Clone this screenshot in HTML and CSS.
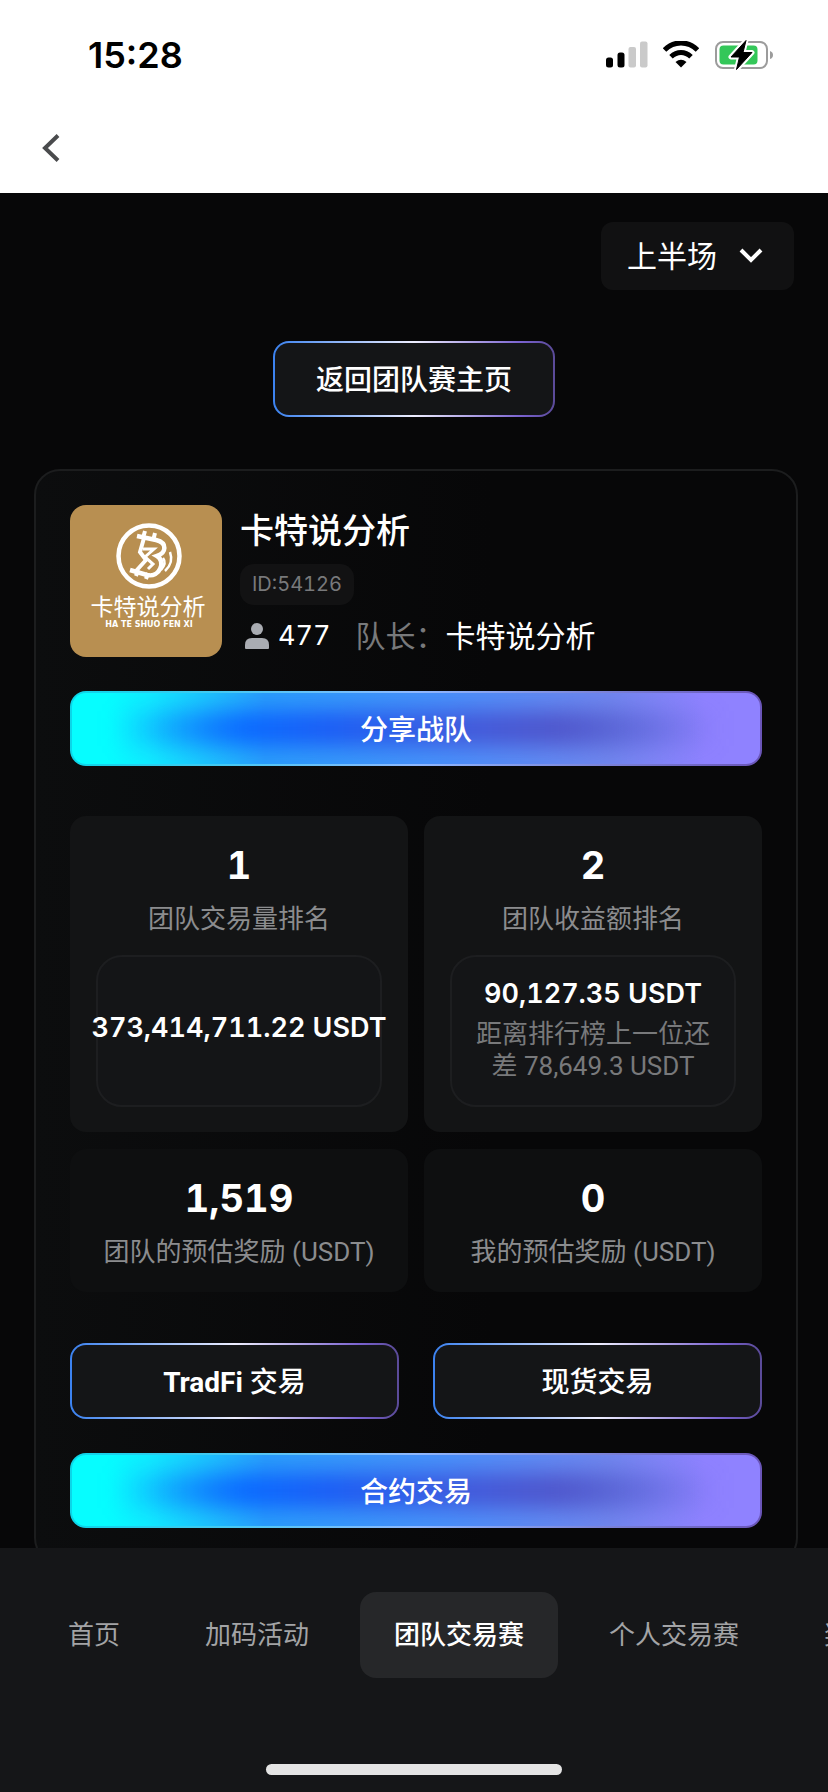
FILE: index.html
```
<!DOCTYPE html>
<html lang="zh-CN">

<head>
	<meta charset="UTF-8">
	<meta name="viewport" content="width=device-width, initial-scale=1">
	<title>团队交易赛</title>
	<link rel="stylesheet" href="styles.css">
</head>

<body>
	<div class="app">
		<header class="top">
			<div class="status_bar">
				<span class="clock">15:28</span>
				<div class="status_icons">
					<svg class="icon_signal" width="42" height="28" viewBox="0 0 42 28">
						<rect x="0" y="16.5" width="7" height="10" rx="2.5" />
						<rect x="11.5" y="11.5" width="7" height="15" rx="2.5" />
						<rect x="22.5" y="6" width="7.5" height="20.500" rx="2" fill="#cacaca" />
						<rect x="34" y="0.500" width="7.5" height="26" rx="2" fill="#cacaca" />
					</svg>
					<svg class="icon_wifi" width="36" height="28" viewBox="0 0 36 28">
						<path d="M1.500 9C11 -0.500 25 -0.500 34.500 9" fill="none" stroke="#000" stroke-width="5" />
						<path d="M8 15.800C14 10 22 10 28 15.800" fill="none" stroke="#000" stroke-width="5" />
						<path d="M12.500 21Q18 16.500 23.500 21L18 26.500Z" />
					</svg>
					<svg class="icon_battery" width="60" height="32" viewBox="0 0 60 32">
						<rect x="2" y="3" width="51" height="26" rx="7" fill="#fff" stroke="#9c9c9c" stroke-width="2" />
						<rect x="5.500" y="6.500" width="38" height="19" rx="4" fill="#34c759" />
						<path d="M56 12q3 1 3 4t-3 4z" fill="#9c9c9c" />
						<path d="M32 1.500L17 18h8.500L22.500 30.500L38 13.500h-9z" stroke="#fff" stroke-width="5" stroke-linejoin="round" />
						<path d="M32 1.500L17 18h8.500L22.500 30.500L38 13.500h-9z" stroke="#000" stroke-width="1" stroke-linejoin="round" />
					</svg>
				</div>
			</div>
			<div class="nav_bar">
				<button class="back" type="button" aria-label="返回">
					<svg width="18" height="28" viewBox="0 0 18 28">
						<path d="M16 1.500L3 14L16 26.500" fill="none" stroke="#4a4b4d" stroke-width="4" />
					</svg>
				</button>
			</div>
		</header>

		<main class="content">
			<div class="period">
				<select class="period_select" aria-label="赛段">
					<option>上半场</option>
					<option>下半场</option>
				</select>
				<svg class="period_arrow" width="24" height="16" viewBox="0 0 24 16">
					<path d="M2 2L12 12L22 2" fill="none" stroke="#fff" stroke-width="4" />
				</svg>
			</div>

			<button class="btn btn_outline btn_home" type="button">返回团队赛主页</button>

			<section class="card">
				<div class="team">
					<svg class="avatar" viewBox="0 0 152 152" role="img" aria-label="卡特说分析">
						<rect width="152" height="152" fill="#b88f51" />
						<g fill="none" stroke="#fff">
							<circle cx="79" cy="51" r="30.500" stroke-width="4.500" />
							<path d="M67 31L86 35C98 38 96 48 87 51C96 56 90 73 77 70L60 65" stroke-width="4.500" />
							<path d="M74 33L70 47L76 55L66 66" stroke-width="4" />
							<path d="M73 44H84L75 52L83 59L78 64" stroke-width="3" />
							<path d="M75 26L73 33M85 28L83 36M68 65L66 71M78 68L76 74" stroke-width="4" />
							<path d="M93 53Q97 58 91 65M100 47Q104 58 95 66" stroke-width="2.500" />
						</g>
						<text class="avatar_name" x="78" y="110">卡特说分析</text>
						<text class="avatar_latin" x="79" y="122">HA TE SHUO FEN XI</text>
					</svg>
					<div class="team_info">
						<h1 class="team_name">卡特说分析</h1>
						<span class="team_id">ID:54126</span>
						<div class="team_meta">
							<svg width="26" height="28" viewBox="0 0 26 28" fill="#a9acb2">
								<circle cx="13" cy="7" r="6" />
								<path d="M1 26v-3q0-7 7-7h10q7 0 7 7v3q0 1-1 1H2q-1 0-1-1z" />
							</svg>
							<span class="team_count">477</span>
							<span class="team_label">队长：</span>
							<span class="team_leader">卡特说分析</span>
						</div>
					</div>
				</div>

				<button class="btn btn_primary" type="button">分享战队</button>

				<div class="stats">
					<div class="stat">
						<div class="stat_value">1</div>
						<div class="stat_label">团队交易量排名</div>
						<div class="stat_box">
							<div class="amount">373,414,711.22 USDT</div>
						</div>
					</div>
					<div class="stat">
						<div class="stat_value">2</div>
						<div class="stat_label">团队收益额排名</div>
						<div class="stat_box">
							<div class="amount">90,127.35 USDT</div>
							<p class="stat_hint">距离排行榜上一位还差 78,649.3 USDT</p>
						</div>
					</div>
					<div class="stat stat_dim">
						<div class="stat_value">1,519</div>
						<div class="stat_label">团队的预估奖励 (USDT)</div>
					</div>
					<div class="stat stat_dim">
						<div class="stat_value">0</div>
						<div class="stat_label">我的预估奖励 (USDT)</div>
					</div>
				</div>

				<div class="trade">
					<button class="btn btn_outline" type="button"><b>TradFi</b> 交易</button>
					<button class="btn btn_outline" type="button">现货交易</button>
				</div>
				<button class="btn btn_primary" type="button">合约交易</button>
			</section>
		</main>

		<footer class="bottom">
			<nav class="tabs">
				<a class="tab" href="#">首页</a>
				<a class="tab" href="#">加码活动</a>
				<a class="tab tab_active" href="#">团队交易赛</a>
				<a class="tab" href="#">个人交易赛</a>
				<a class="tab" href="#">奖励</a>
			</nav>
			<div class="home_indicator"></div>
		</footer>
	</div>
</body>

</html>
```
FILE: styles.css
```
* {
	box-sizing: border-box;
}

body {
	margin: 0;
	background-color: #070708;
	color: #fff;
	font-family: Inter, "Noto Sans CJK SC", sans-serif;
	font-variant-numeric: tabular-nums;
}

button, select {
	font-family: inherit;
	color: inherit;
	cursor: pointer;
}

.app {
	display: flex;
	flex-direction: column;
	height: 100vh;
}

/* Status bar and back button */
.top {
	flex: none;
	background-color: #fff;
	color: #000;
}

.status_bar {
	display: flex;
	justify-content: space-between;
	align-items: center;
	height: 110px;
	padding: 0 54px 0 88px;
}

.clock {
	font-size: 36px;
	font-weight: 600;
	font-variant-numeric: normal;
}

.status_icons {
	display: flex;
	align-items: center;
	gap: 15px;
}

.nav_bar {
	display: flex;
	align-items: center;
	height: 83px;
	padding: 0 34px 8px;
}

.back {
	display: flex;
	padding: 8px;
	border: 0;
	background: none;
}

/* Page */
.content {
	flex: 1;
	min-height: 0;
	overflow: hidden auto;
	scrollbar-width: none;
	padding: 29px 34px 24px;
}

.period {
	position: relative;
	width: 193px;
	margin-left: auto;
}

.period_select {
	display: block;
	width: 100%;
	height: 68px;
	padding: 0 26px;
	border: 0;
	border-radius: 12px;
	background-color: #111112;
	font-size: 30px;
	appearance: none;
}

.period_arrow {
	position: absolute;
	right: 31px;
	top: 26px;
	pointer-events: none;
}

.btn {
	display: block;
	width: 100%;
	height: 76px;
	padding: 0 41px 2px;
	border: 2px solid transparent;
	border-radius: 16px;
	font-family: Roboto, "Noto Sans CJK SC", sans-serif;
	font-size: 28px;
	font-weight: 500;
}

.btn_outline {
	background:
		linear-gradient(#141517, #141517) padding-box,
		linear-gradient(90deg, #3b82f0, #eef 50%, #7a62d0 88%, #5a4a98) border-box;
}

.btn_home {
	width: auto;
	margin: 51px auto 52px;
}

/* Blue glow sits inside the button, under its text */
.btn_primary {
	position: relative;
	z-index: 0;
	overflow: hidden;
	height: 75px;
	background:
		linear-gradient(90deg, #06fdff 5%, #10ecff 11%, #2a9dfb 28%, #4a90fa 55%, #7086ee 78%, #8f82ff 92%) padding-box,
		linear-gradient(90deg, #0bd5e8, #8fb8ff 50%, #6a55b8) border-box;
}

.btn_primary::before {
	content: "";
	position: absolute;
	z-index: -1;
	inset: 18px 6%;
	background: linear-gradient(90deg, #0a80ff00, #0a68ff 22%, #1a5cf5 35%, #4358d8 60%, #4f55ca 74%, #6a60e000);
	filter: blur(11px);
}

.card {
	margin-right: -4px;
	padding: 34px;
	border: 2px solid #1c1d1e;
	border-radius: 26px;
	background: linear-gradient(90deg, #0c0d0e, #070708 60%);
}

.team {
	display: flex;
	gap: 18px;
	margin-bottom: 34px;
}

.avatar {
	flex: none;
	width: 152px;
	height: 152px;
	border-radius: 16px;
}

.avatar_name, .avatar_latin {
	fill: #fff;
	text-anchor: middle;
}

.avatar_name {
	font-size: 23px;
}

.avatar_latin {
	font-family: "DejaVu Sans", sans-serif;
	font-size: 8px;
	font-weight: 700;
}

.team_info {
	display: flex;
	flex-direction: column;
	align-items: flex-start;
}

.team_name {
	margin: 0 0 7px;
	font-size: 34px;
	font-weight: 500;
	line-height: 52px;
}

.team_id {
	padding: 0 12px;
	border-radius: 14px;
	background-color: #121213;
	color: #78797b;
	font-size: 20px;
	line-height: 41px;
}

.team_meta {
	display: flex;
	align-items: center;
	margin-top: 11px;
	padding-left: 4px;
	font-size: 30px;
	line-height: 40px;
}

.team_count {
	margin: 0 25px 0 8px;
	font-size: 27px;
}

.team_label {
	color: #78797b;
}

.stats {
	display: grid;
	grid-template-columns: 1fr 1fr;
	gap: 17px 16px;
	margin: 50px 0 51px;
}

.stat {
	display: flex;
	flex-direction: column;
	align-items: center;
	min-width: 0;
	padding: 25px 26px;
	border-radius: 16px;
	background-color: #131415;
	text-align: center;
}

.stat_dim {
	padding-bottom: 20px;
	background-color: #0e0f10;
}

.stat_value {
	font-size: 38px;
	font-weight: 700;
	line-height: 48px;
}

.stat_label {
	margin-top: 10px;
	color: #8b8c8e;
	font-family: Roboto, "Noto Sans CJK SC", sans-serif;
	font-size: 26px;
	line-height: 40px;
}

.stat_box {
	display: flex;
	flex-direction: column;
	align-items: center;
	justify-content: center;
	width: 100%;
	height: 152px;
	margin-top: 16px;
	padding: 0 20px 6px;
	border: 2px solid #1d1e20;
	border-radius: 26px;
	background-color: #141517;
}

.amount {
	font-size: 27px;
	font-weight: 600;
	line-height: 40px;
	white-space: nowrap;
}

.stat_hint {
	margin: 4px 0 0;
	color: #78797b;
	font-family: Roboto, "Noto Sans CJK SC", sans-serif;
	font-size: 26px;
	line-height: 32px;
}

.trade {
	display: grid;
	grid-template-columns: 1fr 1fr;
	gap: 34px;
	margin-bottom: 34px;
}

/* Bottom tabs */
.bottom {
	flex: none;
	overflow: hidden;
	padding: 44px 0 17px;
	background-color: #151618;
}

.tabs {
	display: flex;
	gap: 17px;
	padding: 0 34px;
}

.tab {
	flex: none;
	padding: 0 34px;
	border-radius: 16px;
	color: #a3a4a6;
	font-size: 26px;
	line-height: 86px;
	text-decoration: none;
}

.tab_active {
	background-color: #262729;
	color: #fff;
	font-weight: 500;
}

.home_indicator {
	width: 36%;
	max-width: 296px;
	height: 11px;
	margin: 86px auto 0;
	border-radius: 6px;
	background-color: #e4e4e4;
}
```
